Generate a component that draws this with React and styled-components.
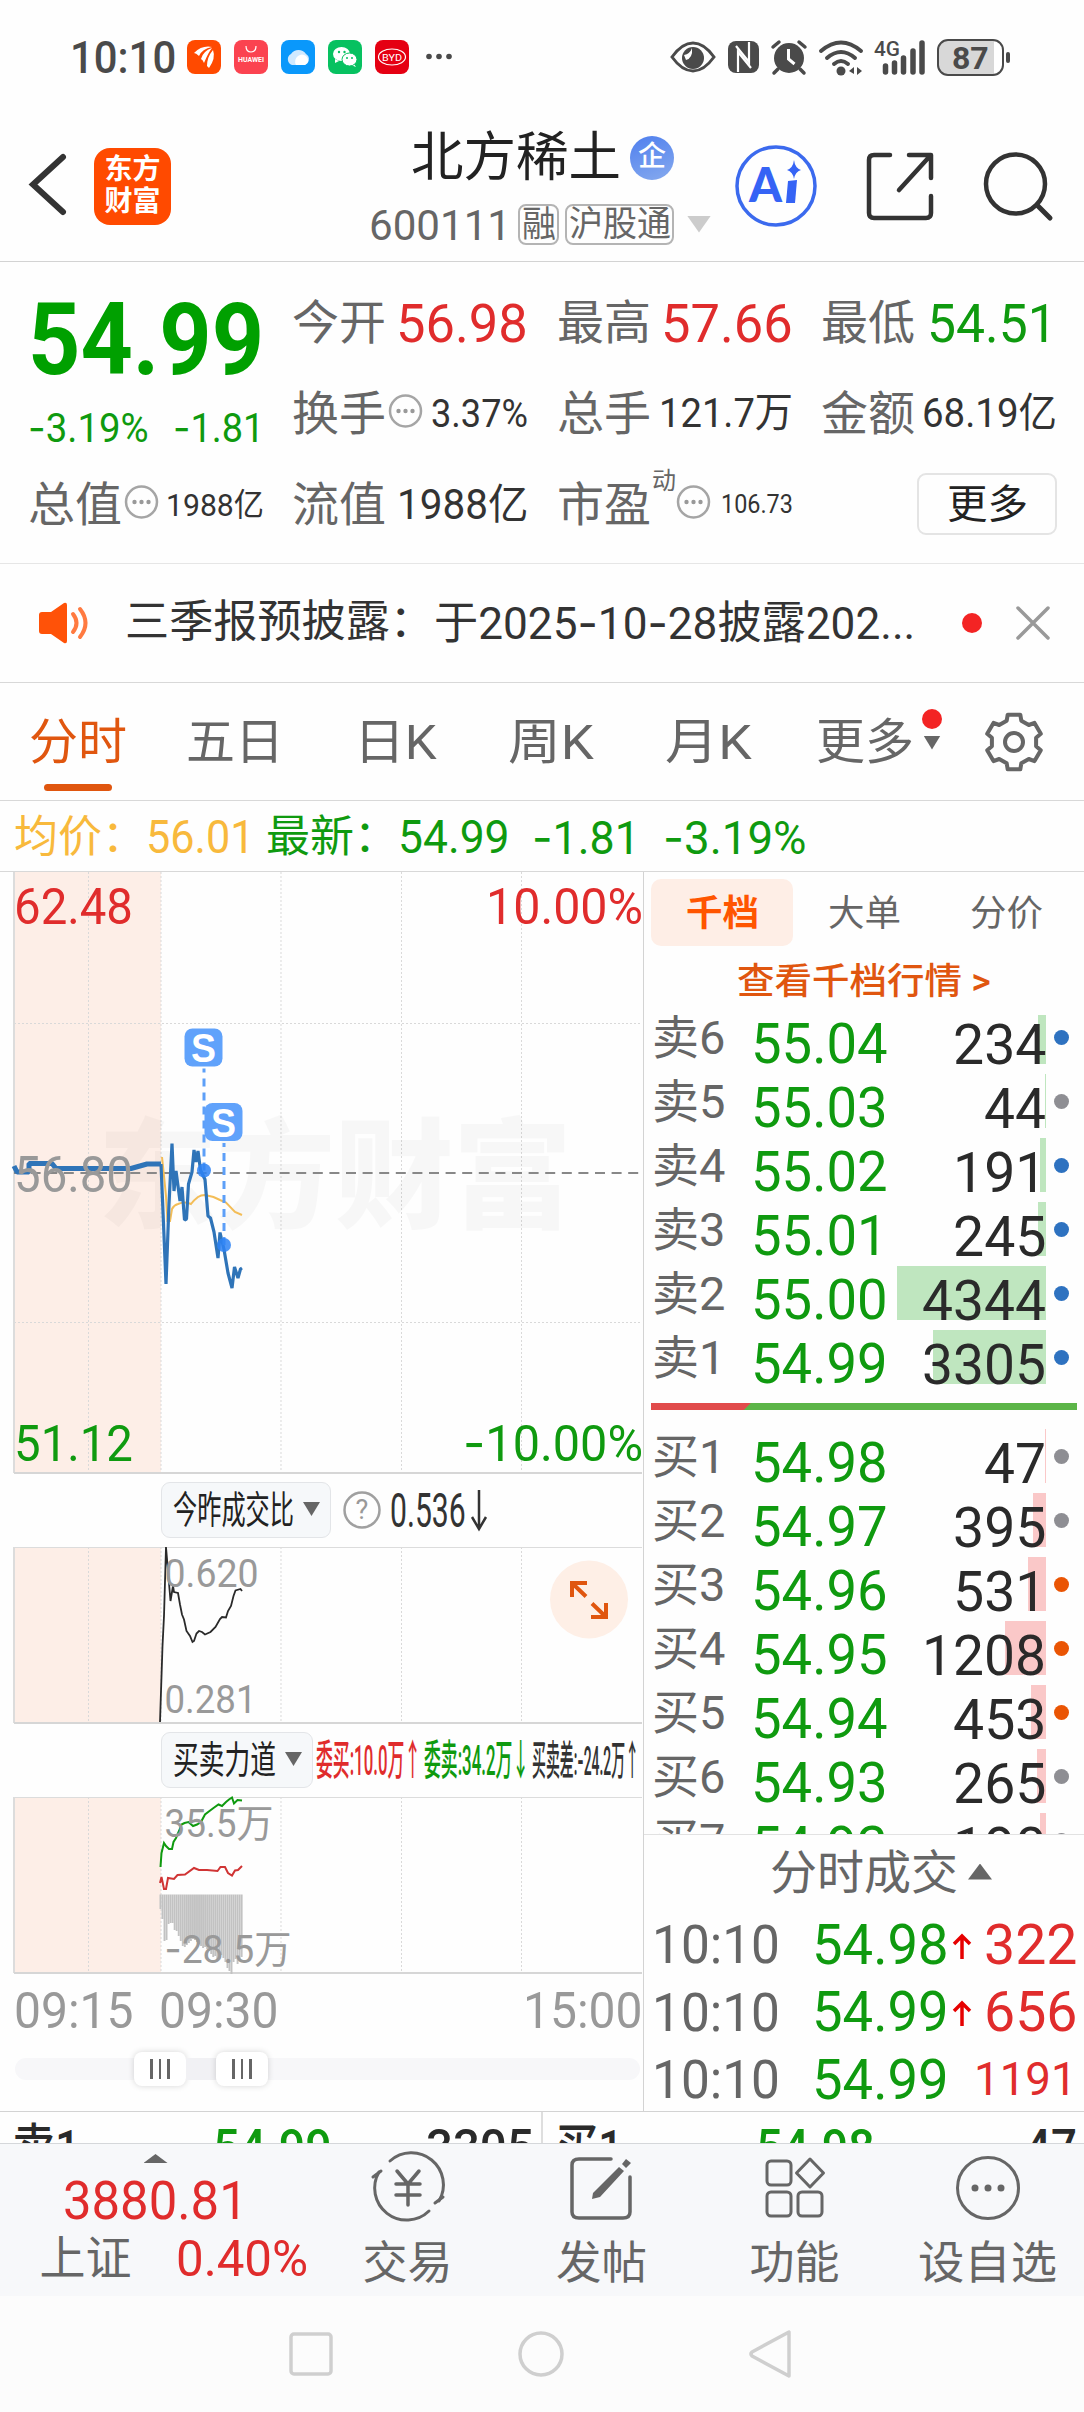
import React, { useLayoutEffect, useRef, useState } from 'react'
import styled, { createGlobalStyle } from 'styled-components'

const RED = '#e02c2c'
const GREEN = '#0f9a0f'
const ORANGE = '#e0560f'
const GREY = '#666'
const DARK = '#2a2a2a'

const GlobalStyle = createGlobalStyle`
  * {
    box-sizing: border-box;
  }
  body {
    margin: 0;
    background: #fdfdfd;
    font-family: Roboto, 'Noto Sans CJK SC', sans-serif;
    color: ${DARK};
  }
  svg {
    display: block;
    flex: none;
    overflow: visible;
  }
`

/* ---------- text ---------- */

const FitBox = styled.span`
  display: inline-block;
  flex: none;
  width: ${({ $w }) => $w}px;
  height: ${({ $size }) => Math.round($size * 1.2)}px;
  line-height: ${({ $size }) => Math.round($size * 1.2)}px;
  font-size: ${({ $size }) => $size}px;
  font-weight: ${({ $weight }) => $weight || 400};
  color: ${({ $color }) => $color || 'inherit'};
  white-space: nowrap;
`
const FitInner = styled.span`
  display: inline-block;
  transform-origin: 0 50%;
`
const Dash = styled.span`
  font-family: Inter, sans-serif;
`

// 文字按给定宽度横向缩放
function Fit({ w, size, color, weight, children }) {
  const ref = useRef(null)
  const [scale, setScale] = useState(1)
  useLayoutEffect(() => {
    setScale(w / ref.current.offsetWidth)
  }, [w, size, children])
  const parts = String(children).split('-')
  return (
    <FitBox $w={w} $size={size} $color={color} $weight={weight}>
      <FitInner ref={ref} style={{ transform: `translateY(${size * 0.03}px) scaleX(${scale})` }}>
        {parts.map((part, idx) => (
          <React.Fragment key={idx}>
            {idx > 0 && <Dash>-</Dash>}
            {part}
          </React.Fragment>
        ))}
      </FitInner>
    </FitBox>
  )
}

const Page = styled.div`
  width: 1084px;
  height: 2412px;
  overflow: hidden;
  display: flex;
  flex-direction: column;
  background: #fefefe;
`

/* ---------- status bar ---------- */

const StatusBar = styled.div`
  flex: none;
  height: 114px;
  padding: 0 74px 0 70px;
  display: flex;
  align-items: center;
  justify-content: space-between;
  color: #4a4a4a;
`
const StatusGroup = styled.div`
  display: flex;
  align-items: center;
  gap: ${({ $gap }) => $gap}px;
`
const AppIcon = styled.svg`
  width: 34px;
  height: 34px;
`
const Battery = styled.div`
  display: flex;
  align-items: center;
  gap: 2px;
  &::after {
    content: '';
    width: 4px;
    height: 11px;
    border-radius: 2px;
    background: #4a4a4a;
  }
`
const BatteryBody = styled.div`
  width: 67px;
  height: 37px;
  border: 2.5px solid #4a4a4a;
  border-radius: 11px;
  background: linear-gradient(90deg, #d8d8d8 87%, #fff 87%);
  display: flex;
  align-items: center;
  justify-content: center;
`

function StatusIcons() {
  return (
    <StatusGroup $gap={12}>
      <svg width="46" height="32" viewBox="0 0 46 32">
        <path d="M2 16Q12 2 23 2T44 16Q34 30 23 30T2 16Z" fill="none" stroke="#4a4a4a" strokeWidth="3" />
        <circle cx="23" cy="17" r="11" fill="#4a4a4a" />
        <path d="M14 14q6-1 8-7 1 10-6 12z" fill="#fff" />
      </svg>
      <svg width="31" height="32" viewBox="0 0 31 32">
        <rect width="31" height="32" rx="8" fill="#4a4a4a" />
        <path d="M10 31V11L23 27M21 1V21L8 5" fill="none" stroke="#fff" strokeWidth="2.200" />
      </svg>
      <svg width="36" height="34" viewBox="0 0 36 34">
        <circle cx="18" cy="18" r="15" fill="#4a4a4a" />
        <path d="M2 7l6-5M34 7l-6-5M7 29l-4 4M29 29l4 4" stroke="#4a4a4a" strokeWidth="3.500" strokeLinecap="round" />
        <path d="M17.500 9v10l6 5" fill="none" stroke="#fff" strokeWidth="3" />
      </svg>
      <svg width="44" height="35" viewBox="0 0 44 35">
        <g fill="none" stroke="#4a4a4a" strokeWidth="4" strokeLinecap="round">
          <path d="M2 11q20-17 40 0M8 18q14-12 28 0M15 24q7-6 14 0" />
        </g>
        <circle cx="22" cy="31" r="4.500" fill="#4a4a4a" />
        <path d="M35 27v7l-5-3zM37 27v8M38 27l5 4-5 4z" fill="#4a4a4a" />
      </svg>
      <svg width="50" height="35" viewBox="0 0 50 35">
        <text x="-1" y="16" fontSize="20" fontWeight="500" textLength="26" lengthAdjust="spacingAndGlyphs" fill="#4a4a4a">
          4G
        </text>
        <path
          d="M10.500 26v6M19.500 23v9M28.500 18v14M38 11v21M47 3v29"
          stroke="#4a4a4a"
          strokeWidth="5.500"
          strokeLinecap="round"
        />
      </svg>
      <Battery>
        <BatteryBody>
          <Fit w={37} size={32} weight={700}>
            87
          </Fit>
        </BatteryBody>
      </Battery>
    </StatusGroup>
  )
}

function AppIcons() {
  return (
    <StatusGroup $gap={13}>
      <AppIcon viewBox="0 0 34 34">
        <rect width="34" height="34" rx="8" fill="#ff4a00" />
        <path
          d="M7 13q8-8 18-6-10 2-13 9-3-3-5-3zM14 19q2-8 11-11-4 5-8 15-1-3-3-4zM20 26q0-9 6-16 3 8-4 18z"
          fill="#fff"
        />
      </AppIcon>
      <AppIcon viewBox="0 0 34 34">
        <rect width="34" height="34" rx="8" fill="#fb4350" />
        <path d="M12 6q0 6 5 6t5-6" fill="none" stroke="#fff" strokeWidth="1.200" />
        <text x="4" y="22" fontSize="6.500" fontWeight="700" textLength="26" lengthAdjust="spacingAndGlyphs" fill="#fff">
          HUAWEI
        </text>
      </AppIcon>
      <AppIcon viewBox="0 0 34 34">
        <rect width="34" height="34" rx="8" fill="#0a98fb" />
        <path d="M11 25a6 6 0 0 1-1-11 9 9 0 0 1 15 0 6 6 0 0 1-2 11z" fill="#cfe9ff" />
        <path d="M15 25a7 7 0 0 1 2-9q4-3 8 0 5 5-1 9z" fill="#fff" />
      </AppIcon>
      <AppIcon viewBox="0 0 34 34">
        <rect width="34" height="34" rx="8" fill="#07c160" />
        <ellipse cx="13.500" cy="14" rx="8.500" ry="7" fill="#fff" />
        <path d="M7 19v4l4-2zM26 24l2 3-5-2z" fill="#fff" />
        <ellipse cx="21.500" cy="19.500" rx="7.500" ry="6.500" fill="#fff" stroke="#07c160" strokeWidth="1" />
        <g fill="#07c160">
          <circle cx="11" cy="12" r="1.200" />
          <circle cx="16.500" cy="12" r="1.200" />
          <circle cx="19" cy="18" r="1" />
          <circle cx="24" cy="18" r="1" />
        </g>
      </AppIcon>
      <AppIcon viewBox="0 0 34 34">
        <rect width="34" height="34" rx="8" fill="#e50012" />
        <ellipse cx="17" cy="17" rx="13.500" ry="8" fill="none" stroke="#fff" strokeWidth="1.200" />
        <text x="7" y="20.500" fontSize="9" textLength="20" lengthAdjust="spacingAndGlyphs" fill="#fff">
          BYD
        </text>
      </AppIcon>
      <svg width="32" height="34" viewBox="0 0 32 34" fill="#4a4a4a">
        <circle cx="7" cy="16.500" r="2.800" />
        <circle cx="17" cy="16.500" r="2.800" />
        <circle cx="27" cy="16.500" r="2.800" />
      </svg>
    </StatusGroup>
  )
}

/* ---------- header ---------- */

const Header = styled.header`
  flex: none;
  height: 148px;
  padding: 0 32px 3px 18px;
  border-bottom: 1px solid #d3d3d3;
  display: flex;
  align-items: center;
`
const LogoBox = styled.div`
  width: 77px;
  height: 77px;
  margin-left: 28px;
  border-radius: 16px;
  background: #ff4a00;
  color: #fff;
  font-size: 28px;
  font-weight: 700;
  line-height: 32px;
  padding-top: 6px;
  text-align: center;
`
const TitleBlock = styled.div`
  width: 342px;
  margin-left: 198px;
  align-self: flex-start;
  padding-top: 15px;
`
const TitleRow = styled.div`
  height: 54px;
  padding-left: 42px;
  display: flex;
  align-items: center;
  gap: 9px;
  color: #222;
`
const CorpBadge = styled.span`
  width: 44px;
  height: 44px;
  margin-top: 3px;
  border-radius: 50%;
  background: linear-gradient(160deg, #4f7fee, #86aaee);
  color: #fff;
  font-size: 28px;
  font-weight: 500;
  line-height: 42px;
  text-align: center;
`
const CodeRow = styled.div`
  height: 44px;
  margin-top: 19px;
  display: flex;
  align-items: center;
`
const MarkTag = styled.span`
  height: 41px;
  width: ${({ $w }) => $w}px;
  margin-left: ${({ $ml }) => $ml}px;
  border: 2px solid #b4b4b4;
  border-radius: 8px;
  display: flex;
  align-items: center;
  justify-content: center;
  color: ${GREY};
`
const Caret = styled.i`
  flex: none;
  width: ${({ $w }) => $w}px;
  height: ${({ $h }) => $h}px;
  margin-left: ${({ $ml }) => $ml || 0}px;
  background: ${({ $color }) => $color};
  clip-path: ${({ $up }) => ($up ? 'polygon(50% 0, 100% 100%, 0 100%)' : 'polygon(0 0, 100% 0, 50% 100%)')};
`
const HeaderTools = styled.div`
  margin-left: auto;
  display: flex;
  align-items: center;
  gap: 49px;
`

function TopHeader() {
  return (
    <Header>
      <svg width="48" height="64" viewBox="0 0 48 64">
        <path d="M45 3L15 30.500 45 58" fill="none" stroke="#333" strokeWidth="6" strokeLinecap="round" />
      </svg>
      <LogoBox>
        东方
        <br />
        财富
      </LogoBox>
      <TitleBlock>
        <TitleRow>
          <Fit w={210} size={53}>
            北方稀土
          </Fit>
          <CorpBadge>企</CorpBadge>
        </TitleRow>
        <CodeRow>
          <Fit w={142} size={43} color={GREY}>
            600111
          </Fit>
          <MarkTag $w={41} $ml={7}>
            <Fit w={34} size={36}>
              融
            </Fit>
          </MarkTag>
          <MarkTag $w={109} $ml={6}>
            <Fit w={102} size={35}>
              沪股通
            </Fit>
          </MarkTag>
          <Caret $w={24} $h={17} $ml={13} $color="#ccc" />
        </CodeRow>
      </TitleBlock>
      <HeaderTools>
        <svg width="82" height="84" viewBox="0 0 82 84">
          <circle cx="41" cy="42" r="39" fill="none" stroke="#3b6aee" strokeWidth="3.500" />
          <text x="14" y="58" fontFamily="Lato" fontSize="47" fontWeight="900" fill="#3563f5">
            A
          </text>
          <path d="M53 37l9-1-2 23h-9z" fill="#3563f5" />
          <path d="M59 16q1 8 7 10-6 2-7 9-1-7-7-9 6-2 7-10z" fill="#3563f5" />
        </svg>
        <svg width="68" height="72" viewBox="0 0 68 72">
          <g fill="none" stroke="#333" strokeWidth="4.500" strokeLinecap="round" strokeLinejoin="round">
            <path d="M24 5H8q-5 0-5 5v53q0 5 5 5h52q5 0 5-5V46" />
            <path d="M43 5h22v23M64 6L33 40" />
          </g>
        </svg>
        <svg width="69" height="74" viewBox="0 0 69 74">
          <circle cx="32.500" cy="35" r="29.500" fill="none" stroke="#333" strokeWidth="4.500" />
          <path d="M54 56l13 13" stroke="#333" strokeWidth="5" strokeLinecap="round" />
        </svg>
      </HeaderTools>
    </Header>
  )
}

/* ---------- quote ---------- */

const QuoteGrid = styled.section`
  flex: none;
  height: 302px;
  padding: 14px 0 0 28px;
  border-bottom: 1px solid #e6e6e6;
  display: grid;
  grid-template-columns: 264px 265px 264px 235px;
  grid-template-rows: repeat(3, 91px);
`
const PriceCell = styled.div`
  grid-row: span 2;
  width: 236px;
`
const BigPrice = styled.div`
  height: 121px;
  display: flex;
  align-items: center;
`
const ChangeRow = styled.div`
  height: 60px;
  display: flex;
  align-items: center;
  justify-content: space-between;
`
const Cell = styled.div`
  width: 236px;
  display: flex;
  align-items: center;
  justify-content: ${({ $end }) => ($end ? 'flex-end' : 'flex-start')};
`
const CellValue = styled.span`
  margin-left: auto;
  display: flex;
`
const Sup = styled.span`
  align-self: flex-start;
  margin: 9px -2px 0 1px;
  font-size: 24px;
  line-height: 28px;
  color: ${GREY};
`
const InfoDots = styled.svg`
  margin-left: 2px;
`
const MoreButton = styled.div`
  width: 140px;
  height: 62px;
  border: 2px solid #e4e4e4;
  border-radius: 9px;
  display: flex;
  align-items: center;
  justify-content: center;
  color: #222;
`

function DotsIcon() {
  return (
    <InfoDots width="35" height="35" viewBox="0 0 35 35">
      <circle cx="17.500" cy="16" r="15.500" fill="none" stroke="#a5a5a5" strokeWidth="2.500" />
      <g fill="#999">
        <circle cx="10.500" cy="16" r="2.200" />
        <circle cx="17.500" cy="16" r="2.200" />
        <circle cx="24.500" cy="16" r="2.200" />
      </g>
    </InfoDots>
  )
}

const quotes = [
  { label: '今开', value: '56.98', w: 132, size: 54, color: RED },
  { label: '最高', value: '57.66', w: 132, size: 54, color: RED },
  { label: '最低', value: '54.51', w: 130, size: 54, color: GREEN },
  { label: '换手', value: '3.37%', w: 97, size: 38, info: true },
  { label: '总手', value: '121.7万', w: 134, size: 41 },
  { label: '金额', value: '68.19亿', w: 135, size: 41 },
  { label: '总值', value: '1988亿', w: 98, size: 32, info: true },
  { label: '流值', value: '1988亿', w: 131, size: 42 },
  { label: '市盈', sup: '动', value: '106.73', w: 72, size: 25, info: true },
]

function Quote() {
  return (
    <QuoteGrid>
      <PriceCell>
        <BigPrice>
          <Fit w={236} size={101} weight={700} color="#00a000">
            54.99
          </Fit>
        </BigPrice>
        <ChangeRow>
          <Fit w={121} size={40} color={GREEN}>
            -3.19%
          </Fit>
          <Fit w={91} size={40} color={GREEN}>
            -1.81
          </Fit>
        </ChangeRow>
      </PriceCell>
      {quotes.map((item, idx) => (
        <Cell key={idx}>
          <Fit w={94} size={47} color={GREY}>
            {item.label}
          </Fit>
          {item.sup && <Sup>{item.sup}</Sup>}
          {item.info && <DotsIcon />}
          <CellValue>
            <Fit w={item.w} size={item.size} color={item.color || '#333'}>
              {item.value}
            </Fit>
          </CellValue>
        </Cell>
      ))}
      <Cell $end>
        <MoreButton>
          <Fit w={81} size={40}>
            更多
          </Fit>
        </MoreButton>
      </Cell>
    </QuoteGrid>
  )
}

/* ---------- notice ---------- */

const NoticeBar = styled.div`
  flex: none;
  height: 119px;
  padding: 0 34px 0 36px;
  border-bottom: 1px solid #d8d8d8;
  display: flex;
  align-items: center;
  color: #333;
`
const NoticeText = styled.div`
  margin: 0 0 2px 35px;
  display: flex;
`
const RedDot = styled.i`
  flex: none;
  width: 20px;
  height: 20px;
  margin-left: auto;
  border-radius: 50%;
  background: #f32424;
`
const CloseIcon = styled.svg`
  margin-left: 34px;
`

function Notice() {
  return (
    <NoticeBar>
      <svg width="54" height="44" viewBox="0 0 54 44">
        <path d="M3 14q0-3 3-3h9L28 2q3-1 3 2v36q0 3-3 2L15 33H6q-3 0-3-3z" fill="#ff5208" />
        <path d="M37 13q7 9 0 18M44 8q11 14 0 28" fill="none" stroke="#ff7a40" strokeWidth="4" strokeLinecap="round" />
      </svg>
      <NoticeText>
        <Fit w={309} size={44}>
          三季报预披露：
        </Fit>
        <Fit w={481} size={45}>
          于2025-10-28披露202...
        </Fit>
      </NoticeText>
      <RedDot />
      <CloseIcon width="34" height="34" viewBox="0 0 34 34">
        <path d="M2 2l30 30M32 2L2 32" stroke="#999" strokeWidth="3.500" strokeLinecap="round" />
      </CloseIcon>
    </NoticeBar>
  )
}

/* ---------- period tabs ---------- */

const TabBar = styled.nav`
  flex: none;
  height: 118px;
  padding-left: 29px;
  border-bottom: 1px solid #d8d8d8;
  display: grid;
  grid-template-columns: 157px 168px 154px 157px 151px 169px 60px;
  color: ${GREY};
`
const Tab = styled.div`
  position: relative;
  display: flex;
  align-items: center;
  color: ${({ $active }) => ($active ? ORANGE : 'inherit')};
  &::after {
    content: '';
    display: ${({ $active }) => ($active ? 'block' : 'none')};
    position: absolute;
    left: 15px;
    bottom: 9px;
    width: 68px;
    height: 7px;
    border-radius: 4px;
    background: ${ORANGE};
  }
`
const TabMarks = styled.div`
  width: 20px;
  height: 50px;
  margin: 0 0 24px 8px;
  padding-top: 4px;
  display: flex;
  flex-direction: column;
  align-items: center;
  gap: 7px;
`

const periods = [
  ['分时', 98],
  ['五日', 98],
  ['日K', 83],
  ['周K', 86],
  ['月K', 87],
]

// 六齿齿轮
const gearPath = Array.from({ length: 6 }, (_, i) => {
  const point = (deg, r) => {
    const a = ((i * 60 - 90 + deg) * Math.PI) / 180
    return `${(29 + r * Math.cos(a)).toFixed(1)} ${(29 + r * Math.sin(a)).toFixed(1)}`
  }
  return `${point(-19, 22.5)}L${point(-13, 28)}L${point(13, 28)}L${point(19, 22.5)}`
}).join('L')

function PeriodTabs() {
  return (
    <TabBar>
      {periods.map(([name, w], idx) => (
        <Tab key={name} $active={idx === 0}>
          <Fit w={w} size={49}>
            {name}
          </Fit>
        </Tab>
      ))}
      <Tab>
        <Fit w={98} size={49}>
          更多
        </Fit>
        <TabMarks>
          <RedDot />
          <Caret $w={17} $h={14} $color={GREY} />
        </TabMarks>
      </Tab>
      <Tab>
        <svg width="58" height="58" viewBox="0 0 58 58">
          <path d={`M${gearPath}Z`} fill="none" stroke={GREY} strokeWidth="4" strokeLinejoin="round" />
          <circle cx="29" cy="29" r="9" fill="none" stroke={GREY} strokeWidth="4" />
        </svg>
      </Tab>
    </TabBar>
  )
}

/* ---------- price line ---------- */

const InfoBar = styled.div`
  flex: none;
  height: 71px;
  padding-left: 14px;
  border-bottom: 1px solid #d8d8d8;
  display: flex;
  align-items: center;
  color: ${GREEN};
`
const Gap = styled.i`
  flex: none;
  width: ${({ $w }) => $w}px;
`

function PriceInfo() {
  return (
    <InfoBar>
      <Fit w={132} size={44} color="#f8b93c">
        均价：
      </Fit>
      <Fit w={109} size={46} color="#f8b93c">
        56.01
      </Fit>
      <Gap $w={11} />
      <Fit w={132} size={44}>
        最新：
      </Fit>
      <Fit w={112} size={46}>
        54.99
      </Fit>
      <Gap $w={22} />
      <Fit w={108} size={46}>
        -1.81
      </Fit>
      <Gap $w={23} />
      <Fit w={144} size={46}>
        -3.19%
      </Fit>
    </InfoBar>
  )
}

/* ---------- charts ---------- */

const Main = styled.main`
  flex: none;
  height: 1240px;
  display: flex;
  border-bottom: 1px solid #d3d3d3;
`
const ChartSide = styled.section`
  width: 643px;
  display: flex;
  flex-direction: column;
`
const SubHead = styled.div`
  flex: none;
  height: 74px;
  padding: 0 0 1px 161px;
  display: flex;
  align-items: center;
`
const Chip = styled.div`
  flex: none;
  width: ${({ $w }) => $w}px;
  height: 56px;
  margin-right: ${({ $mr }) => $mr}px;
  padding: 0 10px 1px 11px;
  border: 1px solid #e3e5e8;
  border-radius: 9px;
  background: #f6f8fa;
  display: flex;
  align-items: center;
  justify-content: space-between;
  color: #222;
`
const TimeAxis = styled.div`
  flex: none;
  height: 69px;
  padding: 2px 0 0 14px;
  display: flex;
  align-items: center;
  color: #999;
`
const SliderTrack = styled.div`
  width: 625px;
  height: 22px;
  margin: 16px 0 0 15px;
  padding-left: 119px;
  border-radius: 11px;
  background: #f7f7f9;
  display: flex;
  align-items: center;
`
const SliderRange = styled.div`
  width: 30px;
  height: 22px;
  background: #f1f1f4;
`
const Handle = styled.div`
  width: 52px;
  height: 34px;
  border-radius: 8px;
  background: #fff;
  box-shadow: 0 0 6px rgba(0, 0, 0, 0.16);
  display: flex;
  align-items: center;
  justify-content: center;
  gap: 6px;
  i {
    width: 2.5px;
    height: 20px;
    background: #666;
  }
`

const columns = [88.5, 161, 281, 401.5, 521.5]

function ChartFrame({ height, top = 0, rows = [] }) {
  const end = top + height
  return (
    <>
      <rect x="14" y={top} width="147" height={height} fill="#fdeee7" />
      <g stroke="#d9d9d9" strokeWidth="1" strokeDasharray="2 2">
        {columns.map((x) => (
          <line key={x} x1={x} x2={x} y1={top} y2={end} />
        ))}
        {rows.map((y) => (
          <line key={y} x1="14" x2="642" y1={y} y2={y} />
        ))}
      </g>
      <path d={`M14 ${top}V${end}`} stroke="#dcdcdc" strokeWidth="2" />
      <path d={`M14 ${end}H642`} stroke="#d6d6d6" strokeWidth="2" />
    </>
  )
}

function Label({ x, y, w, size = 50, color = '#999', children }) {
  return (
    <text x={x} y={y} fontSize={size} fill={color} textLength={w} lengthAdjust="spacingAndGlyphs">
      {children.startsWith('-') ? <tspan fontFamily="Inter">-</tspan> : null}
      {children.replace('-', '')}
    </text>
  )
}

const trades = [
  { x: 204, boxX: 184.5, boxY: 157.5, y: 299.5 },
  { x: 224, boxX: 204.5, boxY: 232, y: 374 },
]

function PriceChart() {
  return (
    <svg width="643" height="601" viewBox="0 1 643 601">
      <ChartFrame height={601} top={1} rows={[152.5, 451.5]} />
      <text
        x="98"
        y="348"
        fontSize="119"
        fontWeight="900"
        fontFamily="Noto Sans CJK SC"
        textLength="474"
        fill="#000"
        fillOpacity="0.027"
      >
        东方财富
      </text>
      <path d="M14 302H642" stroke="#888" strokeWidth="2" strokeDasharray="10 6.600" />
      <path
        d="M162 286L164 305 166 325 167.500 350H170L172 338Q174 334 178 333Q185 330 191 333Q194 329 198 326Q201 324 205 324L213.500 326 220 329 226 331.500 235 341 242 344"
        fill="none"
        stroke="#f3bd57"
        strokeWidth="2"
      />
      <g fill="none" stroke="#2f74b8" strokeLinejoin="bevel">
        <path d="M14 295L17 301H29V292.500H52L56 297.500H131L147 293H161" strokeWidth="5" />
        <path
          d="M161 293L164 365 166 413 169 333 172 272.500 174 320 176 300 180 330 182 316 184.500 349 186.500 348 188.500 313 192 301 194 279 196 291 198 280 200.500 299 205 308.500 208 345 210.500 347 214 361 218 387 220 361.500 224 378.500 228 402 232 417 234.500 396 238 407 240.500 398 242 397"
          strokeWidth="3.200"
        />
      </g>
      {trades.map((t) => (
        <g key={t.x}>
          <path
            d={`M${t.x} ${t.boxY + 40}V${t.y}`}
            stroke="#5d9ff8"
            strokeWidth="3"
            strokeDasharray="8 6"
            strokeDashoffset="4"
          />
          <circle cx={t.x} cy={t.y} r="7" fill="#2d82f5" fillOpacity="0.85" />
          <rect x={t.boxX} y={t.boxY} width="38" height="38" rx="8" fill="#60a2fb" />
          <text
            x={t.boxX + 19}
            y={t.boxY + 33.5}
            textAnchor="middle"
            fontFamily="Liberation Sans"
            fontWeight="700"
            fontSize="40"
            textLength="25"
            lengthAdjust="spacingAndGlyphs"
            fill="#fff"
          >
            S
          </text>
        </g>
      ))}
      <Label x={14} y={52.500} w={119} color={RED}>
        62.48
      </Label>
      <Label x={486} y={52.500} w={157} color={RED}>
        10.00%
      </Label>
      <Label x={14} y={321} w={119}>
        56.80
      </Label>
      <Label x={14} y={589.500} w={119} color={GREEN}>
        51.12
      </Label>
      <Label x={463} y={589.500} w={180} color={GREEN}>
        -10.00%
      </Label>
    </svg>
  )
}

function RatioChart() {
  return (
    <svg width="643" height="176" viewBox="0 0 643 176">
      <ChartFrame height={176} />
      <path d="M14 .5H642" stroke="#dcdcdc" />
      <path
        d="M160 175L162.500 99 164 69 166 0 169 36 170.500 54 173 39 174 45 178 46 180 57.500 182 67.500 184 72.500 186.500 84 190 89 192.500 95 194 94 196.500 86.500 199 84 202 85 205 87.500 210.500 85 215.500 80 220 72 222 70 226 70.500 228 64 231 59 233.500 49 235.500 43.500 240.500 42 242 44"
        fill="none"
        stroke="#2a2a2a"
        strokeWidth="1.800"
      />
      <Label x={164.500} y={40} w={94} size={39}>
        0.620
      </Label>
      <Label x={164.500} y={166} w={92} size={39}>
        0.281
      </Label>
      <circle cx="589" cy="52.500" r="39" fill="#feefe6" />
      <g fill="none" stroke={ORANGE} strokeWidth="4">
        <path d="M572 50V36H587M573 37L586 49.500" />
        <path d="M606 56V70H591M605 69L592 56.500" />
      </g>
    </svg>
  )
}

const diffs = [
  112, 122, 144, 143, 127, 126, 126, 133, 134, 139, 144, 149, 150, 148, 146, 144, 142, 143, 145, 147, 149, 151, 150,
  152, 154, 157, 160, 159, 162, 160, 158, 161, 165, 171, 174, 177, 165, 162, 167, 164, 160,
]

function ForceChart() {
  return (
    <svg width="643" height="176" viewBox="0 0 643 176">
      <ChartFrame height={176} />
      <path d="M14 .5H642" stroke="#dcdcdc" />
      <g fill="#c2c2c2">
        {diffs.map((y, idx) => (
          <rect key={idx} x={159.5 + idx * 2.03} y="97.500" width="1.900" height={y - 97.5} />
        ))}
      </g>
      <path
        d="M160.500 70L161.500 56 164 46 166 49 169 52H172L173.500 45 176 41 179 34 181.500 27.500 184.500 26 188.500 25 193 29 197 27.500 201 25 205 17.500 209.500 14 213.500 11 218.500 7.500 222 9 226 5 229 2.500 232 .5 234 6.500 237.500 3 242 3.500"
        fill="none"
        stroke={GREEN}
        strokeWidth="2"
      />
      <path
        d="M160 86L161.500 80 164 92H166L168 81 174 82 177.500 78 185 77.500 194 71 199 73H207L217.500 74 220.500 70H225L228 76 232 78.500 235 73.500 238 73 242 69"
        fill="none"
        stroke="#d03434"
        strokeWidth="2"
      />
      <Label x={164.500} y={40} w={109} size={39}>
        35.5万
      </Label>
      <Label x={164.500} y={166} w={127} size={39}>
        -28.5万
      </Label>
    </svg>
  )
}

function Charts() {
  return (
    <ChartSide>
      <PriceChart />
      <SubHead>
        <Chip $w={170} $mr={12}>
          <Fit w={121} size={38}>
            今昨成交比
          </Fit>
          <Caret $w={17} $h={14} $color={GREY} />
        </Chip>
        <svg width="38" height="38" viewBox="0 0 38 38">
          <circle cx="19" cy="19" r="17.500" fill="none" stroke="#a0a0a0" strokeWidth="2.500" />
          <text x="19" y="28" textAnchor="middle" fontSize="27" fill="#999">
            ?
          </text>
        </svg>
        <Gap $w={9} />
        <Fit w={76} size={48} color="#333">
          0.536
        </Fit>
        <svg width="26" height="42" viewBox="0 0 26 42">
          <path d="M13 1V40M6 28L13 40 20 28" fill="none" stroke="#333" strokeWidth="2.500" />
        </svg>
      </SubHead>
      <RatioChart />
      <SubHead>
        <Chip $w={152} $mr={3}>
          <Fit w={103} size={38}>
            买卖力道
          </Fit>
          <Caret $w={17} $h={14} $color={GREY} />
        </Chip>
        <Fit w={105} size={42} color={RED} weight={500}>
          委买:10.0万↑
        </Fit>
        <Gap $w={3} />
        <Fit w={105} size={42} color={GREEN} weight={500}>
          委卖:34.2万↓
        </Fit>
        <Gap $w={3} />
        <Fit w={107} size={41} color="#333" weight={500}>
          买卖差:-24.2万↑
        </Fit>
      </SubHead>
      <ForceChart />
      <TimeAxis>
        <Fit w={120} size={50}>
          09:15
        </Fit>
        <Gap $w={25} />
        <Fit w={120} size={50}>
          09:30
        </Fit>
        <Gap $w={244} />
        <Fit w={120} size={50}>
          15:00
        </Fit>
      </TimeAxis>
      <SliderTrack>
        <Handle>
          <i />
          <i />
          <i />
        </Handle>
        <SliderRange />
        <Handle>
          <i />
          <i />
          <i />
        </Handle>
      </SliderTrack>
    </ChartSide>
  )
}

/* ---------- order book ---------- */

const BookSide = styled.section`
  flex: 1;
  border-left: 1px solid #d3d3d3;
  padding-top: 7px;
`
const BookTabs = styled.div`
  height: 67px;
  padding: 0 6px 0 7px;
  display: flex;
`
const BookTab = styled.div`
  width: 142px;
  padding-top: 2px;
  border-radius: 10px;
  background: ${({ $active }) => ($active ? '#feeee6' : 'transparent')};
  color: ${({ $active }) => ($active ? '#ff5500' : GREY)};
  display: flex;
  align-items: center;
  justify-content: center;
`
const BookLink = styled.div`
  height: 69px;
  padding: 2px 0 0 0;
  display: flex;
  align-items: center;
  justify-content: center;
  color: ${ORANGE};
`
const Levels = styled.div`
  height: ${({ $h }) => $h}px;
  overflow: hidden;
`
const Level = styled.div`
  height: 64px;
  padding: 0 15px 0 8px;
  display: flex;
  align-items: center;
  &.cut {
    margin-top: -10px;
  }
`
const LevelPrice = styled.div`
  margin-left: 26px;
  padding-top: 11px;
`
const Quantity = styled.div`
  position: relative;
  flex: 1;
  height: 54px;
  margin-right: 8px;
  padding-top: 12px;
  display: flex;
  align-items: center;
  justify-content: flex-end;
  span {
    position: relative;
  }
  &::before {
    content: '';
    position: absolute;
    right: 0;
    top: 0;
    width: ${({ $bar }) => $bar}px;
    height: 54px;
    background: ${({ $tone }) => $tone};
  }
`
const LevelDot = styled.i`
  width: 15px;
  height: 15px;
  border-radius: 50%;
  background: ${({ $color }) => $color};
`
const RatioBar = styled.div`
  height: 7px;
  margin: 14px 7px 14px 7px;
  background: linear-gradient(135deg, #e14b4b 70px, #5cb548 71px);
`

const BLUE_DOT = '#2e72c0'
const GREY_DOT = '#8e8e93'
const ORANGE_DOT = '#ea5504'

const sells = [
  ['卖6', '55.04', '234', 8, BLUE_DOT],
  ['卖5', '55.03', '44', 1, GREY_DOT],
  ['卖4', '55.02', '191', 6, BLUE_DOT],
  ['卖3', '55.01', '245', 8, BLUE_DOT],
  ['卖2', '55.00', '4344', 149, BLUE_DOT],
  ['卖1', '54.99', '3305', 113, BLUE_DOT],
]
const buys = [
  ['买1', '54.98', '47', 1, GREY_DOT],
  ['买2', '54.97', '395', 13, GREY_DOT],
  ['买3', '54.96', '531', 18, ORANGE_DOT],
  ['买4', '54.95', '1208', 41, ORANGE_DOT],
  ['买5', '54.94', '453', 15, ORANGE_DOT],
  ['买6', '54.93', '265', 9, GREY_DOT],
  ['买7', '54.92', '190', 6, GREY_DOT],
]

function LevelRow({ data, tone, cut }) {
  const [name, price, count, bar, dot] = data
  return (
    <Level className={cut ? 'cut' : ''}>
      <Fit w={73} size={47} color={GREY}>
        {name}
      </Fit>
      <LevelPrice>
        <Fit w={137} size={56} color={GREEN}>
          {price}
        </Fit>
      </LevelPrice>
      <Quantity $bar={bar} $tone={tone}>
        <Fit w={count.length * 31} size={56}>
          {count}
        </Fit>
      </Quantity>
      <LevelDot $color={dot} />
    </Level>
  )
}

const DealHead = styled.div`
  height: 75px;
  border-top: 1px solid #e2e2e2;
  padding: 0 0 1px 126px;
  display: flex;
  align-items: center;
`
const Deal = styled.div`
  height: 67.5px;
  padding: 1px 7px 0 8px;
  display: flex;
  align-items: center;
`
const DealCount = styled.div`
  margin-left: auto;
`
const UpArrow = styled.svg`
  margin: 6px 0 0 3px;
`

const deals = [
  { price: '54.98', up: true, count: '322', w: 93, size: 56 },
  { price: '54.99', up: true, count: '656', w: 93, size: 56 },
  { price: '54.99', count: '1191', w: 103, size: 47 },
]

function OrderBook() {
  return (
    <BookSide>
      <BookTabs>
        <BookTab $active>
          <Fit w={73} size={36} weight={700}>
            千档
          </Fit>
        </BookTab>
        <BookTab>
          <Fit w={73} size={36}>
            大单
          </Fit>
        </BookTab>
        <BookTab>
          <Fit w={73} size={36}>
            分价
          </Fit>
        </BookTab>
      </BookTabs>
      <BookLink>
        <Fit w={254} size={36} weight={500}>
          查看千档行情 &gt;
        </Fit>
      </BookLink>
      <Levels $h={374}>
        {sells.map((row, idx) => (
          <LevelRow key={row[0]} data={row} tone="#bfe6bf" cut={idx === 0} />
        ))}
      </Levels>
      <RatioBar />
      <Levels $h={410}>
        {buys.map((row) => (
          <LevelRow key={row[0]} data={row} tone="#fac8c8" />
        ))}
      </Levels>
      <DealHead>
        <Fit w={188} size={47} color={GREY}>
          分时成交
        </Fit>
        <Caret $up $w={24} $h={16} $ml={10} $color={GREY} />
      </DealHead>
      {deals.map((deal, idx) => (
        <Deal key={idx}>
          <Fit w={128} size={53} color={GREY}>
            10:10
          </Fit>
          <Gap $w={32} />
          <Fit w={137} size={56} color={GREEN}>
            {deal.price}
          </Fit>
          {deal.up && (
            <UpArrow width="20" height="27" viewBox="0 0 20 27">
              <path d="M10 26V4M2 11L10 3 18 11" fill="none" stroke="#e60000" strokeWidth="3.500" />
            </UpArrow>
          )}
          <DealCount>
            <Fit w={deal.w} size={deal.size} color={RED}>
              {deal.count}
            </Fit>
          </DealCount>
        </Deal>
      ))}
    </BookSide>
  )
}

/* ---------- bottom ---------- */

const Peek = styled.div`
  flex: none;
  height: 31px;
  overflow: hidden;
  display: grid;
  grid-template-columns: 541px 543px;
`
const PeekCell = styled.div`
  height: 60px;
  margin-top: 4px;
  padding: 0 7px 0 12px;
  display: flex;
  align-items: center;
`
const PeekPrice = styled.div`
  margin-left: 133px;
`
const PeekRight = styled.div`
  border-left: 2px solid #dedede;
`
const ToolBar = styled.footer`
  flex: none;
  height: 153px;
  border-top: 1px solid #d5d7da;
  background: #f7f8fa;
  display: grid;
  grid-template-columns: 311px 193px 194px 193px 193px;
`
const IndexBlock = styled.div`
  padding-top: 10px;
  display: flex;
  flex-direction: column;
  align-items: center;
`
const IndexLine = styled.div`
  height: ${({ $h }) => $h}px;
  display: flex;
  align-items: center;
  gap: 44px;
  padding-left: ${({ $pl }) => $pl || 0}px;
`
const Tool = styled.div`
  display: flex;
  flex-direction: column;
  align-items: center;
  padding-top: 7px;
  gap: 13px;
  color: ${GREY};
`
const SystemNav = styled.div`
  flex: none;
  height: 116px;
  padding-left: 288px;
  background: #fcfcfc;
  display: flex;
  align-items: center;
`
const NavGlyph = styled.svg`
  margin-right: 184px;
`

function BottomTools() {
  const line = { fill: 'none', stroke: GREY, strokeWidth: 3, strokeLinecap: 'round', strokeLinejoin: 'round' }
  return (
    <ToolBar>
      <IndexBlock>
        <Caret $up $w={24} $h={9} $color={GREY} />
        <IndexLine $h={72}>
          <Fit w={185} size={53} color={RED}>
            3880.81
          </Fit>
        </IndexLine>
        <IndexLine $h={44} $pl={36}>
          <Fit w={92} size={46} color={GREY}>
            上证
          </Fit>
          <Fit w={132} size={50} color={RED}>
            0.40%
          </Fit>
        </IndexLine>
      </IndexBlock>
      <Tool>
        <svg width="74" height="72" viewBox="0 0 74 72">
          <g {...line}>
            <path d="M19 10A32 32 0 0 1 68 50M58 60A32 32 0 0 1 8 21" />
            <path d="M2 26L10 20M72 46L64 52" />
            <path d="M26 20L37 33 48 20M37 33V54M25 33H49M25 44H49" strokeWidth="3.500" />
          </g>
        </svg>
        <Fit w={90} size={45}>
          交易
        </Fit>
      </Tool>
      <Tool>
        <svg width="64" height="72" viewBox="0 0 64 72">
          <g {...line}>
            <path d="M42 8H10Q3 8 3 14V61Q3 67 10 67H54Q61 67 61 61V26" strokeWidth="3.500" />
          </g>
          <path d="M50 16L55 20 31 46 23 48 24 42zM57 8L62 12 57 17 53 13z" fill={GREY} />
        </svg>
        <Fit w={91} size={45}>
          发帖
        </Fit>
      </Tool>
      <Tool>
        <svg width="62" height="72" viewBox="0 0 62 72">
          <g {...line}>
            <rect x="3" y="10" width="24" height="24" rx="4" />
            <rect x="3" y="41" width="24" height="24" rx="4" />
            <rect x="34" y="41" width="24" height="24" rx="4" />
            <path d="M46 8L59.500 22 46 36 32.500 22z" />
          </g>
        </svg>
        <Fit w={90} size={45}>
          功能
        </Fit>
      </Tool>
      <Tool>
        <svg width="70" height="72" viewBox="0 0 70 72">
          <circle cx="35" cy="37" r="30.500" {...line} />
          <g fill={GREY}>
            <circle cx="22" cy="37" r="3.500" />
            <circle cx="35" cy="37" r="3.500" />
            <circle cx="48" cy="37" r="3.500" />
          </g>
        </svg>
        <Fit w={139} size={45}>
          设自选
        </Fit>
      </Tool>
    </ToolBar>
  )
}

export default function App() {
  return (
    <Page>
      <GlobalStyle />
      <StatusBar>
        <StatusGroup $gap={11}>
          <Fit w={106} size={45} weight={500}>
            10:10
          </Fit>
          <AppIcons />
        </StatusGroup>
        <StatusIcons />
      </StatusBar>
      <TopHeader />
      <Quote />
      <Notice />
      <PeriodTabs />
      <PriceInfo />
      <Main>
        <Charts />
        <OrderBook />
      </Main>
      <Peek>
        <PeekCell>
          <Fit w={68} size={49} weight={500}>
            卖1
          </Fit>
          <PeekPrice>
            <Fit w={119} size={50} color={GREEN} weight={500}>
              54.99
            </Fit>
          </PeekPrice>
          <DealCount>
            <Fit w={108} size={50} weight={500}>
              3305
            </Fit>
          </DealCount>
        </PeekCell>
        <PeekRight>
          <PeekCell>
            <Fit w={68} size={49} weight={500}>
              买1
            </Fit>
            <PeekPrice>
              <Fit w={119} size={50} color={GREEN} weight={500}>
                54.98
              </Fit>
            </PeekPrice>
            <DealCount>
              <Fit w={52} size={50} weight={500}>
                47
              </Fit>
            </DealCount>
          </PeekCell>
        </PeekRight>
      </Peek>
      <BottomTools />
      <SystemNav>
        <NavGlyph width="46" height="46" viewBox="0 0 46 46">
          <rect x="3" y="3" width="40" height="40" rx="3" fill="none" stroke="#cfcfcf" strokeWidth="3.500" />
        </NavGlyph>
        <NavGlyph width="46" height="46" viewBox="0 0 46 46">
          <circle cx="23" cy="23" r="21" fill="none" stroke="#cfcfcf" strokeWidth="3.500" />
        </NavGlyph>
        <NavGlyph width="46" height="50" viewBox="0 0 46 50">
          <path d="M41 3V47L4 27Q2 25 4 23z" fill="none" stroke="#cfcfcf" strokeWidth="3.500" strokeLinejoin="round" />
        </NavGlyph>
      </SystemNav>
    </Page>
  )
}
